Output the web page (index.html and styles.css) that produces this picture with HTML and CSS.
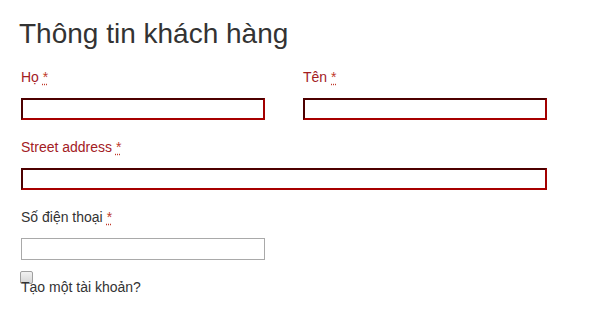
FILE: index.html
```html
<!DOCTYPE html>
<html lang="vi">
<head>
<meta charset="utf-8">
<title>Thông tin khách hàng</title>
<link rel="stylesheet" href="styles.css">
</head>
<body>
<div class="billing">
  <h3 class="title">Thông tin khách hàng</h3>
  <div class="row two">
    <p class="field invalid">
      <label class="lbl">Họ <abbr class="req" title="required">*</abbr></label>
      <input class="inp" type="text">
    </p>
    <p class="field invalid">
      <label class="lbl">Tên <abbr class="req" title="required">*</abbr></label>
      <input class="inp" type="text">
    </p>
  </div>
  <div class="row">
    <p class="field invalid wide">
      <label class="lbl">Street address <abbr class="req" title="required">*</abbr></label>
      <input class="inp" type="text">
    </p>
  </div>
  <div class="row">
    <p class="field">
      <label class="lbl">Số điện thoại <abbr class="req" title="required">*</abbr></label>
      <input class="inp" type="text">
    </p>
  </div>
  <div class="account">
    <input class="chk" type="checkbox">
    <span class="chk-text">Tạo một tài khoản?</span>
  </div>
</div>
</body>
</html>
```

FILE: styles.css
```css
html, body {
  margin: 0;
  padding: 0;
  background: #fff;
}
body {
  font-family: "Liberation Sans", Arial, sans-serif;
  color: #333;
}
.billing {
  padding: 0 0 0 21px;
  width: 526px;
}
.title {
  margin: 0;
  padding-top: 18px;
  font-size: 28px;
  font-weight: normal;
  line-height: 32px;
  color: #333;
  margin-left: -2px;
  margin-bottom: 17px;
}
.row {
  display: flex;
}
.row.two {
  gap: 38px;
}
.field {
  margin: 0 0 17px 0;
  width: 244px;
  display: flex;
  flex-direction: column;
}
.field.wide {
  width: 526px;
}
.lbl {
  display: block;
  height: 20px;
  font-size: 14px;
  line-height: 20px;
  color: #333;
  margin-bottom: 11px;
}
.invalid .lbl {
  color: #a3201f;
}
.req {
  color: #c0392b;
  font-size: 14px;
  text-decoration: underline dotted #c0392b;
  text-underline-offset: 2px;
}
.inp {
  box-sizing: border-box;
  height: 22px;
  width: 100%;
  margin: 0;
  padding: 2px 4px;
  font: 14px "Liberation Sans", Arial, sans-serif;
  border: 1px solid #a9a9a9;
  background: #fff;
  outline: none;
}
.invalid .inp {
  border: 2px solid;
  border-color: #4d0000 #a30000 #a80000 #4d0000;
}
.account {
  display: flex;
  flex-direction: column;
  margin-top: -6px;
}
.chk {
  -webkit-appearance: none;
  appearance: none;
  width: 13px;
  height: 13px;
  margin: 0 0 0 -1px;
  border: 1px solid #a0a0a0;
  border-radius: 2px;
  box-sizing: border-box;
  background: linear-gradient(#f2f2f2, #d6d6d6);
}
.chk-text {
  font-size: 14px;
  line-height: 18px;
  margin-top: -6px;
  color: #333;
}
```
